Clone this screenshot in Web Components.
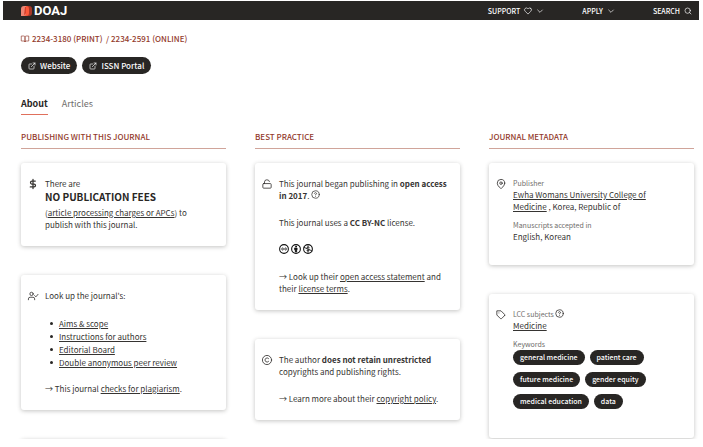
<!DOCTYPE html>
<html lang="en">
<head>
<meta charset="utf-8">
<meta name="viewport" content="width=device-width, initial-scale=1">
<title>Journal – DOAJ</title>
<style>
    body {
        --ink: #282624;
        --accent: #933a2c;
        box-sizing: border-box;
        display: flex;
        flex-direction: column;
        height: 100vh;
        margin: 0;
        padding: 1px 4px 8px 3px;
        overflow: hidden;
        background: #fff;
        color: #363432;
        font: 8px/12px "Noto Sans CJK SC", "Noto Sans", sans-serif;
    }
    main { flex: 1; min-height: 0; overflow: hidden; padding: 0 5px 0 18px; }
    a { color: inherit; text-underline-offset: 1px; }
    p, ul { margin: 0 0 15px; }
    p:last-child { margin-bottom: 0; }
    ul { margin-bottom: 14px; padding-left: 5px; line-height: 13px; list-style: none; }
    li { display: flex; align-items: center; gap: 6px; }
    li::before { content: ""; width: 3px; height: 3px; border-radius: 50%; background: #282624; }
    .fees { margin: 0 0 3px; font-size: 10px; line-height: 14px; text-transform: uppercase; color: #282624; }
    .licence { display: flex; gap: 2px; height: 12px; color: #111; }
</style>
</head>
<body>
<doaj-header></doaj-header>
<main>
    <journal-heading print="2234-3180" online="2234-2591">
        <pill-link href="#website">Website</pill-link>
        <pill-link href="#issn">ISSN Portal</pill-link>
    </journal-heading>
    <journal-tabs></journal-tabs>
    <journal-columns>
        <journal-column heading="Publishing with this journal">
            <info-card icon="dollar">
                <div>There are</div>
                <h3 class="fees">No publication fees</h3>
                <p>(<a href="#apc">article processing charges or APCs</a>) to publish with this journal.</p>
            </info-card>
            <info-card icon="user-check">
                <p>Look up the journal's:</p>
                <ul>
                    <li><a href="#aims">Aims &amp; scope</a></li>
                    <li><a href="#instructions">Instructions for authors</a></li>
                    <li><a href="#board">Editorial Board</a></li>
                    <li><a href="#review">Double anonymous peer review</a></li>
                </ul>
                <p>→ This journal <a href="#plagiarism">checks for plagiarism</a>.</p>
            </info-card>
            <info-card icon=""></info-card>
        </journal-column>
        <journal-column heading="Best practice">
            <info-card icon="unlock">
                <p>This journal began publishing in <b>open access in 2017</b>. <doaj-icon name="help" raised></doaj-icon></p>
                <p>This journal uses a <b>CC BY-NC</b> license.</p>
                <p class="licence"><doaj-icon name="cc"></doaj-icon><doaj-icon name="by"></doaj-icon><doaj-icon name="nc"></doaj-icon></p>
                <p>→ Look up their <a href="#statement">open access statement</a> and their <a href="#terms">license terms</a>.</p>
            </info-card>
            <info-card icon="copyright">
                <p>The author <b>does not retain unrestricted</b> copyrights and publishing rights.</p>
                <p>→ Learn more about their <a href="#copyright">copyright policy</a>.</p>
            </info-card>
        </journal-column>
        <journal-column heading="Journal metadata">
            <info-card icon="pin">
                <meta-entry label="Publisher"><a href="#publisher">Ewha Womans University College of Medicine</a> , Korea, Republic of</meta-entry>
                <meta-entry label="Manuscripts accepted in">English, Korean</meta-entry>
            </info-card>
            <info-card icon="tag">
                <meta-entry label="LCC subjects" help><a href="#medicine">Medicine</a></meta-entry>
                <meta-entry label="Keywords">
                    <keyword-list words="general medicine,patient care,future medicine,gender equity,medical education,data"></keyword-list>
                </meta-entry>
            </info-card>
        </journal-column>
    </journal-columns>
</main>

<script>
// Icon shapes, all on a 24x24 grid
const ICONS = {
    'book': '<path d="M2 3h6a4 4 0 0 1 4 4v14a3 3 0 0 0-3-3H2z"/><path d="M22 3h-6a4 4 0 0 0-4 4v14a3 3 0 0 1 3-3h7z"/>',
    'external': '<path d="M18 13v6a2 2 0 0 1-2 2H5a2 2 0 0 1-2-2V8a2 2 0 0 1 2-2h6"/><path d="M15 3h6v6M10 14 21 3"/>',
    'heart': '<path d="M20.8 4.6a5.5 5.5 0 0 0-7.8 0L12 5.7l-1.1-1.1a5.5 5.5 0 0 0-7.8 7.8l1.1 1.1L12 21.2l7.8-7.7 1-1.1a5.5 5.5 0 0 0 0-7.8z"/>',
    'chevron': '<path d="m5 9 7 7 7-7"/>',
    'search': '<circle cx="11" cy="11" r="8"/><path d="m21 21-4.3-4.3"/>',
    'dollar': '<path stroke-width="3" d="M12 1v22M17.5 5H9.5a3.5 3.5 0 0 0 0 7h5a3.5 3.5 0 0 1 0 7H5.5"/>',
    'user-check': '<path d="M16 21v-2a4 4 0 0 0-4-4H5a4 4 0 0 0-4 4v2"/><circle cx="8.5" cy="7" r="4"/><path d="m16 11 3 3 5-6"/>',
    'unlock': '<rect x="2" y="11" width="20" height="11" rx="2"/><path d="M6 11V7a6 5 0 0 1 11.9-1"/>',
    'copyright': '<circle cx="12" cy="12" r="11"/><path d="M15.8 15.5a5 5 0 1 1 0-7"/>',
    'pin': '<path d="M21 10c0 7-9 13-9 13s-9-6-9-13a9 9 0 0 1 18 0z"/><circle cx="12" cy="10" r="3"/>',
    'tag': '<path d="m20.6 13.4-7.2 7.2a2 2 0 0 1-2.8 0L2 12V2h10l8.6 8.6a2 2 0 0 1 0 2.8z"/><path d="M7 7h.01"/>',
    'help': '<circle cx="12" cy="12" r="10"/><path d="M9.1 9a3 3 0 0 1 5.8 1c0 2-3 3-3 3M12 17h.01"/>',
    'cc': '<circle cx="12" cy="12" r="10.5" stroke-width="2.6"/><path d="M10.6 10.2a2.5 2.5 0 1 0 0 3.6M17.8 10.2a2.5 2.5 0 1 0 0 3.6"/>',
    'by': '<circle cx="12" cy="12" r="10.5" stroke-width="2.6"/><circle cx="12" cy="5.8" r="1.2" fill="currentColor"/><path fill="currentColor" d="M9.5 9.5h5V14h-1v5h-3v-5h-1z"/>',
    'nc': '<circle cx="12" cy="12" r="10.5" stroke-width="2.6"/><path d="m2.5 8 19 8.5M12 4.5v15M15.5 8.500c-1-2-6.500-2-6.500.7M8.500 15c1 2.500 7 2.300 6.800-.5"/>'
};

class DoajIcon extends HTMLElement {
    constructor() {
        super();
        this.attachShadow({ mode: 'open' });
    }

    connectedCallback() {
        this.shadowRoot.innerHTML = `
            <style>
                :host { display: inline-block; width: 10px; height: 10px; flex: none; line-height: 0; }
                :host([small]) { width: 8px; height: 8px; }
                :host([raised]) { width: 9px; height: 9px; vertical-align: top; }
                svg { width: 100%; height: 100%; display: block; overflow: visible; }
            </style>
            <svg viewBox="0 0 24 24" fill="none" stroke="currentColor" stroke-width="2"
                stroke-linecap="round" stroke-linejoin="round" aria-hidden="true">${ICONS[this.getAttribute('name')] || ''}</svg>
        `;
    }
}
customElements.define('doaj-icon', DoajIcon);

class DoajHeader extends HTMLElement {
    constructor() {
        super();
        this.attachShadow({ mode: 'open' });
        this.shadowRoot.innerHTML = `
            <style>
                :host { display: block; background: var(--ink); color: #fff; }
                header { display: flex; justify-content: space-between; align-items: center; height: 18px; padding: 1px 7px 0 18px; }
                a { color: inherit; text-decoration: none; display: flex; align-items: center; }
                .logo { font: bold 13px/18px Roboto, sans-serif; gap: 2px; }
                .logo svg { width: 11px; height: 10px; }
                nav { display: flex; gap: 38px; font-size: 7px; font-weight: 500; text-transform: uppercase; }
                nav a { gap: 4px; }
            </style>
            <header>
                <a class="logo" href="#home">
                    <svg viewBox="0 0 11 10" aria-hidden="true">
                        <path fill="#a83828" d="M6 0h2a3 3 0 0 1 3 3v4a3 3 0 0 1-3 3H5z"/>
                        <path fill="#fd5a3b" d="M4 0h2a3 3 0 0 1 2 3v4a3 3 0 0 1-3 3H2z"/>
                        <path fill="#ee8573" d="M3 0h2v7a3 3 0 0 1-3 3H0V3a3 3 0 0 1 3-3z"/>
                        <path fill="#d8412c" d="M4 1h1v6a3 3 0 0 1-2 2z"/>
                    </svg>DOAJ
                </a>
                <nav>
                    <a href="#support">Support <doaj-icon name="heart" small></doaj-icon><doaj-icon name="chevron" small></doaj-icon></a>
                    <a href="#apply">Apply <doaj-icon name="chevron" small></doaj-icon></a>
                    <a href="#search">Search <doaj-icon name="search" small></doaj-icon></a>
                </nav>
            </header>
        `;
    }
}
customElements.define('doaj-header', DoajHeader);

class JournalHeading extends HTMLElement {
    constructor() {
        super();
        this.attachShadow({ mode: 'open' });
    }

    connectedCallback() {
        this.shadowRoot.innerHTML = `
            <style>
                :host { display: block; padding-top: 13px; }
                p { display: flex; align-items: center; gap: 3px; margin: 0 0 12px; color: var(--accent); font-weight: 500; text-transform: uppercase; }
                div { display: flex; gap: 5px; }
            </style>
            <p><doaj-icon name="book" small></doaj-icon><span>${this.getAttribute('print')} (print)&nbsp; / ${this.getAttribute('online')} (online)</span></p>
            <div><slot></slot></div>
        `;
    }
}
customElements.define('journal-heading', JournalHeading);

class PillLink extends HTMLElement {
    constructor() {
        super();
        this.attachShadow({ mode: 'open' });
    }

    connectedCallback() {
        this.shadowRoot.innerHTML = `
            <style>
                :host { display: block; }
                a { display: flex; align-items: center; gap: 4px; height: 17px; padding: 0 7px; border-radius: 9px; background: var(--ink); color: #fff; text-decoration: none; font-weight: 500; }
            </style>
            <a href="${this.getAttribute('href')}"><doaj-icon name="external" small></doaj-icon><slot></slot></a>
        `;
    }
}
customElements.define('pill-link', PillLink);

class JournalTabs extends HTMLElement {
    constructor() {
        super();
        this.attachShadow({ mode: 'open' });
        this.shadowRoot.innerHTML = `
            <style>
                :host { display: block; margin-top: 23px; }
                div { display: flex; gap: 14px; }
                button { font: inherit; font-size: 9px; line-height: 14px; color: #6f6d6b; background: none; border: 0; border-bottom: 1px solid transparent; padding: 0 0 3px; }
                button[aria-selected="true"] { color: var(--ink); font-weight: bold; border-color: #e0705c; }
            </style>
            <div role="tablist">
                <button role="tab" aria-selected="true">About</button>
                <button role="tab" aria-selected="false">Articles</button>
            </div>
        `;
    }
}
customElements.define('journal-tabs', JournalTabs);

class JournalColumns extends HTMLElement {
    constructor() {
        super();
        this.attachShadow({ mode: 'open' });
        this.shadowRoot.innerHTML = `
            <style>
                :host { display: grid; grid-template-columns: repeat(3, minmax(0, 1fr)); gap: 29px; margin-top: 16px; align-items: start; }
            </style>
            <slot></slot>
        `;
    }
}
customElements.define('journal-columns', JournalColumns);

class JournalColumn extends HTMLElement {
    constructor() {
        super();
        this.attachShadow({ mode: 'open' });
    }

    connectedCallback() {
        this.shadowRoot.innerHTML = `
            <style>
                :host { display: flex; flex-direction: column; gap: 29px; }
                h2 { margin: 0 0 -15px; padding-bottom: 5px; font-size: 8px; line-height: 12px; font-weight: 500; text-transform: uppercase; color: var(--accent); border-bottom: 1px solid #d0a49a; }
            </style>
            <h2>${this.getAttribute('heading')}</h2>
            <slot></slot>
        `;
    }
}
customElements.define('journal-column', JournalColumn);

class InfoCard extends HTMLElement {
    constructor() {
        super();
        this.attachShadow({ mode: 'open' });
    }

    connectedCallback() {
        this.shadowRoot.innerHTML = `
            <style>
                :host { display: grid; grid-template-columns: 10px 1fr; gap: 7px; padding: 15px 11px 15px 7px; border-radius: 3px; background: #fff; box-shadow: 0 1px 4px rgba(40, 38, 36, .28); }
                doaj-icon { margin-top: 1px; }
            </style>
            <doaj-icon name="${this.getAttribute('icon')}"></doaj-icon>
            <div><slot></slot></div>
        `;
    }
}
customElements.define('info-card', InfoCard);

class MetaEntry extends HTMLElement {
    constructor() {
        super();
        this.attachShadow({ mode: 'open' });
    }

    connectedCallback() {
        const help = this.hasAttribute('help') ? ' <doaj-icon name="help" raised></doaj-icon>' : '';
        this.shadowRoot.innerHTML = `
            <style>
                :host { display: block; margin-bottom: 7px; padding-right: 20px; }
                dl, dd { margin: 0; }
                dt { font-size: 7px; line-height: 11px; color: #6f6d6b; }
                doaj-icon { color: var(--ink); }
            </style>
            <dl><dt>${this.getAttribute('label')}${help}</dt><dd><slot></slot></dd></dl>
        `;
    }
}
customElements.define('meta-entry', MetaEntry);

class KeywordList extends HTMLElement {
    constructor() {
        super();
        this.attachShadow({ mode: 'open' });
    }

    connectedCallback() {
        const items = this.getAttribute('words').split(',').map(word => `<li>${word}</li>`).join('');
        this.shadowRoot.innerHTML = `
            <style>
                :host { display: block; margin-bottom: 14px; }
                ul { display: flex; flex-wrap: wrap; gap: 7px 5px; margin: 0; padding: 0; list-style: none; }
                li { padding: 0 7px; border-radius: 8px; background: var(--ink); color: #fff; font-size: 7px; font-weight: 500; line-height: 15px; }
            </style>
            <ul>${items}</ul>
        `;
    }
}
customElements.define('keyword-list', KeywordList);
</script>
</body>
</html>
